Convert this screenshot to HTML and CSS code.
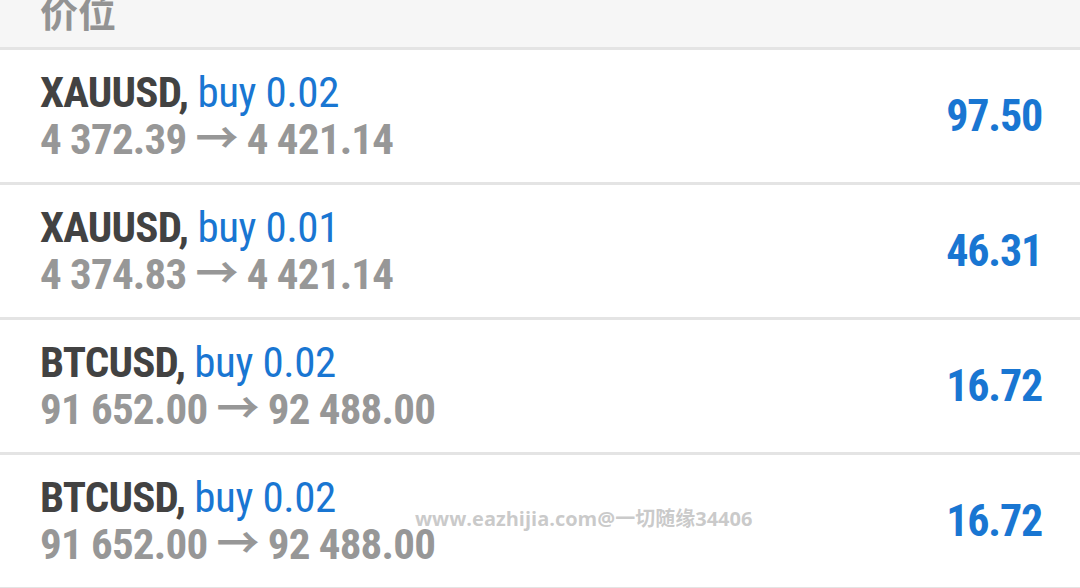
FILE: index.html
```html
<!DOCTYPE html>
<html lang="zh">
<head>
<meta charset="utf-8">
<link rel="stylesheet" href="styles.css">
</head>
<body>
<div class="screen">
  <div class="header"><span class="header-title">价位</span></div>
  <div class="list">
    <div class="row">
      <div class="info">
        <div class="line1"><span class="sym">XAUUSD,</span> <span class="side">buy 0.02</span></div>
        <div class="line2">4 372.39 → 4 421.14</div>
      </div>
      <div class="profit">97.50</div>
    </div>
    <div class="row">
      <div class="info">
        <div class="line1"><span class="sym">XAUUSD,</span> <span class="side">buy 0.01</span></div>
        <div class="line2">4 374.83 → 4 421.14</div>
      </div>
      <div class="profit">46.31</div>
    </div>
    <div class="row">
      <div class="info">
        <div class="line1"><span class="sym">BTCUSD,</span> <span class="side">buy 0.02</span></div>
        <div class="line2">91 652.00 → 92 488.00</div>
      </div>
      <div class="profit">16.72</div>
    </div>
    <div class="row">
      <div class="info">
        <div class="line1"><span class="sym">BTCUSD,</span> <span class="side">buy 0.02</span></div>
        <div class="line2">91 652.00 → 92 488.00</div>
      </div>
      <div class="profit">16.72</div>
    </div>
  </div>
  <div class="watermark">www.eazhijia.com@一切随缘34406</div>
</div>
</body>
</html>
```

FILE: styles.css
```css
html, body {
  margin: 0;
  padding: 0;
  background: #ffffff;
}
.screen {
  position: relative;
  width: 1080px;
  height: 588px;
  overflow: hidden;
  font-family: "Roboto Condensed", "Liberation Sans Narrow", Roboto, "Noto Sans CJK SC", sans-serif;
}
.header {
  height: 47px;
  background: #f6f6f6;
  border-bottom: 3px solid #e4e4e4;
  display: flex;
  align-items: flex-end;
  padding-left: 40px;
  overflow: hidden;
}
.header-title {
  font-family: Roboto, "Noto Sans CJK SC", sans-serif;
  font-size: 38px;
  font-weight: 700;
  color: #939393;
  line-height: 38px;
  margin-bottom: 14px;
}
.row {
  height: 132px;
  border-bottom: 3px solid #e4e4e4;
  display: flex;
  align-items: center;
  justify-content: space-between;
  padding: 0 38px 0 40px;
  background: #ffffff;
}
.info {
  display: flex;
  flex-direction: column;
}
.line1, .line2 {
  font-size: 43px;
  line-height: 47px;
  letter-spacing: -0.8px;
  white-space: nowrap;
}
.sym {
  font-weight: 700;
  color: #424242;
}
.side {
  font-weight: 400;
  letter-spacing: -0.4px;
  color: #1976d2;
}
.line2 {
  font-weight: 700;
  color: #979797;
}
.profit {
  font-size: 44px;
  font-weight: 700;
  letter-spacing: -1.2px;
  color: #1976d2;
}
.watermark {
  position: absolute;
  left: 415px;
  top: 503px;
  font-family: "Open Sans", "Noto Sans CJK SC", sans-serif;
  font-size: 20px;
  font-weight: 700;
  color: rgba(185, 185, 185, 0.75);
  white-space: nowrap;
}
```
